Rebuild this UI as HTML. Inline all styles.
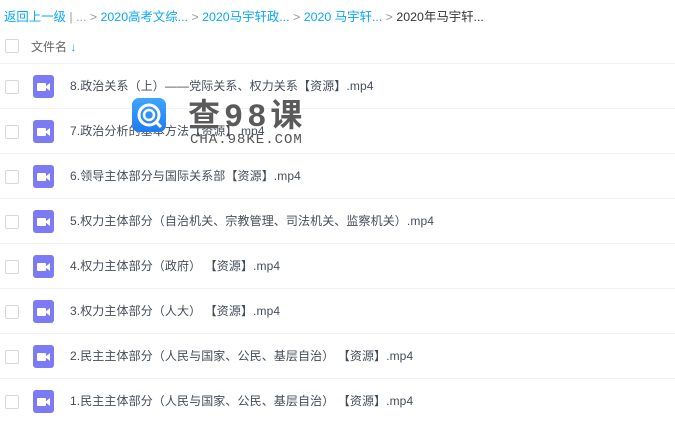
<!DOCTYPE html>
<html><head><meta charset="utf-8"><style>
body{margin:0;width:675px;height:421px;overflow:hidden;background:#fff;font-family:"Liberation Sans","Noto Sans CJK SC",sans-serif;position:relative}
.bc{position:absolute;left:4px;top:7px;font-size:12.4px;color:#06a7ff;white-space:nowrap}
.bc .g{color:#999}.bc .d{color:#333}
.cb{position:absolute;left:5px;width:12px;height:12px;border:1px solid #d5d8de;border-radius:2px}
.row{position:absolute;left:0;width:675px;height:45px;border-top:1px solid #f1f2f5}
.ic{position:absolute;left:33px;top:11px;width:21px;height:23px;background:#7d7af5;border-radius:3px}
.ic:before{content:"";position:absolute;left:4px;top:8px;width:9px;height:8px;background:#fff;border-radius:1px}
.ic:after{content:"";position:absolute;left:12px;top:8px;border-right:5px solid #fff;border-top:4px solid transparent;border-bottom:4px solid transparent;height:0}
.t{position:absolute;left:70px;top:13px;font-size:12px;color:#454d5a;white-space:nowrap;letter-spacing:0.1px}
</style></head><body>
<div class="bc">返回上一级 <span class="g">| ... &gt;</span> 2020高考文综... <span class="g">&gt;</span> 2020马宇轩政... <span class="g">&gt;</span> 2020 马宇轩... <span class="g">&gt;</span> <span class="d">2020年马宇轩...</span></div>
<div class="cb" style="top:39px"></div>
<div style="position:absolute;left:31px;top:38px;font-size:12px;color:#666">文件名 <span style="color:#06a7ff;font-weight:bold">↓</span></div>
<div class="row" style="top:63px"><div class="cb" style="top:16px"></div><div class="ic"></div><div class="t">8.政治关系（上）——党际关系、权力关系【资源】.mp4</div></div>
<div class="row" style="top:108px"><div class="cb" style="top:16px"></div><div class="ic"></div><div class="t">7.政治分析的基本方法【资源】.mp4</div></div>
<div class="row" style="top:153px"><div class="cb" style="top:16px"></div><div class="ic"></div><div class="t">6.领导主体部分与国际关系部【资源】.mp4</div></div>
<div class="row" style="top:198px"><div class="cb" style="top:16px"></div><div class="ic"></div><div class="t">5.权力主体部分（自治机关、宗教管理、司法机关、监察机关）.mp4</div></div>
<div class="row" style="top:243px"><div class="cb" style="top:16px"></div><div class="ic"></div><div class="t">4.权力主体部分（政府） 【资源】.mp4</div></div>
<div class="row" style="top:288px"><div class="cb" style="top:16px"></div><div class="ic"></div><div class="t">3.权力主体部分（人大） 【资源】.mp4</div></div>
<div class="row" style="top:333px"><div class="cb" style="top:16px"></div><div class="ic"></div><div class="t">2.民主主体部分（人民与国家、公民、基层自治） 【资源】.mp4</div></div>
<div class="row" style="top:378px"><div class="cb" style="top:16px"></div><div class="ic"></div><div class="t">1.民主主体部分（人民与国家、公民、基层自治） 【资源】.mp4</div></div>
<div style="position:absolute;left:132px;top:98px;width:34px;height:34px;border-radius:7px;background:linear-gradient(#3ea6ff,#1e7bf0)">
<svg width="34" height="34" viewBox="0 0 34 34"><circle cx="17" cy="17" r="10" fill="none" stroke="#fff" stroke-width="3"/><circle cx="17" cy="17" r="5" fill="none" stroke="#fff" stroke-width="2.5"/><path d="M24 24l5 5" stroke="#fff" stroke-width="3"/></svg></div>
<div style="position:absolute;left:188px;top:90px;font-size:32px;font-weight:bold;color:#5a5a5a;letter-spacing:4px;white-space:nowrap;font-family:'Liberation Mono','Noto Sans CJK SC',monospace">查98课</div>
<div style="position:absolute;left:190px;top:132px;font-size:14px;color:#555;letter-spacing:1px;font-family:'Liberation Mono',monospace">CHA.98KE.COM</div>
</body></html>
